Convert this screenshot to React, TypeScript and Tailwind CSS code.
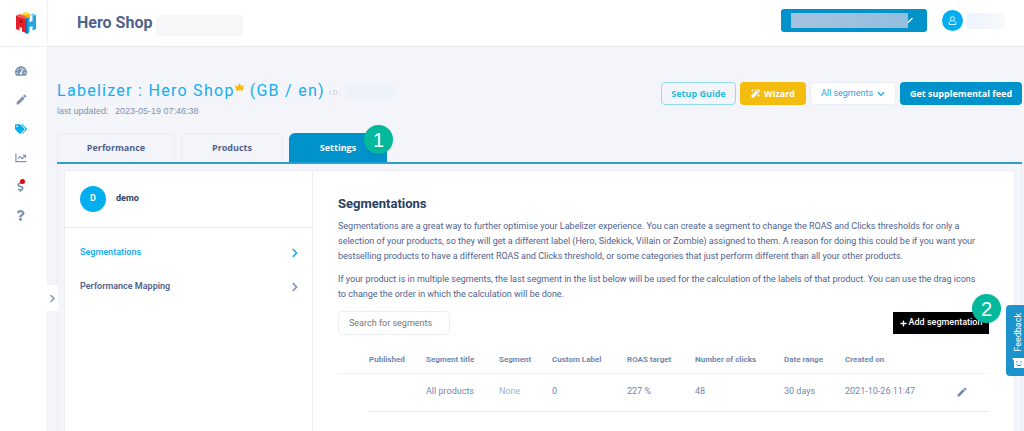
import { useState } from "react";
import {
  FaChevronDown,
  FaChevronRight,
  FaDollarSign,
  FaMagic,
  FaPlus,
  FaQuestion,
  FaTachometerAlt,
  FaTags,
} from "react-icons/fa";
import { MdEdit } from "react-icons/md";

type Segment = {
  title: string;
  segment: string;
  customLabel: string;
  roasTarget: string;
  clicks: string;
  dateRange: string;
  createdOn: string;
};

const SEGMENTS: Segment[] = [
  {
    title: "All products",
    segment: "None",
    customLabel: "0",
    roasTarget: "227 %",
    clicks: "48",
    dateRange: "30 days",
    createdOn: "2021-10-26 11:47",
  },
];

const TABS = [
  { label: "Performance", width: "w-[118px]" },
  { label: "Products", width: "w-[102px]" },
  { label: "Settings", width: "w-[98px]" },
];

const COLUMNS = [
  { label: "Published", width: "w-[57px]" },
  { label: "Segment title", width: "w-[73px]" },
  { label: "Segment", width: "w-[53px]" },
  { label: "Custom Label", width: "w-[75px]" },
  { label: "ROAS target", width: "w-[68px]" },
  { label: "Number of clicks", width: "w-[89px]" },
  { label: "Date range", width: "w-[61px]" },
  { label: "Created on", width: "w-[111px]" },
];

function Logo() {
  return (
    <svg viewBox="0 0 22 24" className="h-6 w-[22px]" aria-hidden="true">
      {/* yellow block behind */}
      <path d="M7.500 2.500 11 1l4 1.500V8l-4 1.500L7.500 8z" fill="#f0b40c" />
      <path d="M7.500 2.500 11 1l4 1.500L11 4z" fill="#ffe23d" />
      {/* red A */}
      <path d="M1 4.500 11 8v14l-4-1.500V17l-2.500-1v3.500L1 18z" fill="#e4202d" />
      <path d="m1 4.500 4-1.500 6.500 3-.5 2z" fill="#f9554e" />
      <path d="m4.500 8.500 3 1v2.500l-3-1z" fill="#a5121f" />
      {/* blue H */}
      <path d="m11 7.500 3.500-1v4.500l3-1V5L21 4v14l-3.500 1.500V15l-3 1v5.500L11 23z" fill="#22a5e2" />
      <path d="m11 7.500 1.500-.500v15.500L11 23z" fill="#0b74b0" />
      <path d="m15 4 3-1.500 3 1.500-3.500 1z" fill="#5cc9f4" />
    </svg>
  );
}

function ChartIcon() {
  return (
    <svg viewBox="0 0 20 16" className="h-2.5 w-3" fill="none" stroke="currentColor" strokeWidth="2">
      <path d="M1.500 1v13H19" />
      <path d="m5 9 3.500-3.500L12 9l5-5M13 3.500h4.500V8" />
    </svg>
  );
}

function CrownIcon() {
  return (
    <svg viewBox="0 0 18 16" className="mt-1 mr-1.5 h-2 w-[9px] shrink-0" fill="#f5b914" aria-hidden="true">
      <path d="M0 3.500 5 7 9 0l4 7 5-3.500L15.500 15h-13z" />
    </svg>
  );
}

function UserIcon() {
  return (
    <svg viewBox="0 0 16 16" className="size-[9px]" fill="none" stroke="currentColor" strokeWidth="1.5">
      <circle cx="8" cy="5" r="3.800" />
      <path d="M5 8.500 2 11.500V15h12v-3.500l-3-3" />
    </svg>
  );
}

function FeedbackIcon() {
  return (
    <svg viewBox="0 0 12 10" className="h-2.5 w-3 shrink-0" aria-hidden="true">
      <path d="M0 0h12v10H2V3z" fill="#fff" />
      <path d="M5 3v1.500M9 3v1.500M4.500 6.500c1 1.500 4 1.500 5 0" fill="none" stroke="#1c93cd" />
    </svg>
  );
}

function StepBadge({ step }: { step: number }) {
  return (
    <span className="flex size-[29px] items-center justify-center rounded-full bg-[#04b89c] font-['Liberation_Sans',sans-serif] text-xl text-white shadow">
      {step}
    </span>
  );
}

function Sidebar() {
  const items = [
    { label: "Dashboard", icon: <FaTachometerAlt size={12} /> },
    { label: "Edit", icon: <MdEdit size={13} /> },
    { label: "Labels", icon: <FaTags size={12} />, active: true },
    { label: "Reports", icon: <ChartIcon /> },
    { label: "Billing", icon: <FaDollarSign className="h-[11px] w-auto" />, alert: true },
    { label: "Help", icon: <FaQuestion className="h-[11px] w-auto" /> },
  ];

  return (
    <aside className="relative w-12 shrink-0 border-r border-[#f0f2f7] bg-white">
      <div className="flex h-[47px] items-center border-b border-[#eceef5] pl-[15px]">
        <Logo />
      </div>
      <nav className="flex flex-col pt-[9px]">
        {items.map((item) => (
          <a
            key={item.label}
            href="#"
            aria-label={item.label}
            className={`flex h-[29px] items-center pl-[15px] ${item.active ? "text-[#03aeef]" : "text-[#7f92b0]"}`}
          >
            <span className="relative">
              {item.icon}
              {item.alert && (
                <span className="absolute -top-0.5 left-[5px] size-[5px] rounded-full bg-[#e30613]" />
              )}
            </span>
          </a>
        ))}
      </nav>
      <button
        type="button"
        aria-label="Expand menu"
        className="absolute top-[285px] left-[47px] flex h-[26px] w-[11px] items-center justify-center bg-white text-[#7f92b0]"
      >
        <FaChevronRight size={9} />
      </button>
    </aside>
  );
}

function Header() {
  return (
    <header className="flex h-[47px] items-center justify-between border-b border-[#e8ebf3] bg-white pr-[19px] pl-[29px]">
      <div className="flex items-center gap-1">
        <h1 className="text-base font-bold text-[#4f628e]">Hero Shop</h1>
        <span className="mt-1 h-[21px] w-[87px] bg-[#f6f7f8]" />
      </div>
      <div className="flex items-center pb-[5px]">
        <button
          type="button"
          aria-label="Select shop"
          className="mr-[15px] flex h-[23px] w-[146px] items-center rounded-[3px] bg-[#0093cb] pl-2.5 text-white"
        >
          <span className="h-[15px] w-[117px] bg-linear-to-r from-[#a5c2df] to-[#93bedd]" />
          <svg viewBox="0 0 5 5" className="size-[5px]" fill="none" stroke="currentColor" strokeWidth="1.5">
            <path d="M0 4.500 4.500 0" />
          </svg>
        </button>
        <span className="flex size-[21px] items-center justify-center rounded-full bg-[#03aeef] text-white">
          <UserIcon />
        </span>
        <span className="ml-1 h-4 w-[38px] bg-linear-to-r from-[#edf4fd] to-[#f8f9fa]" />
      </div>
    </header>
  );
}

function SegmentTable() {
  return (
    <table className="mt-3 w-full table-fixed text-left text-[9px] text-[#7189ae]">
      <thead>
        <tr className="h-[26px] border-b border-[#f1f2f7] text-[8px]">
          <th className="w-[31px]" aria-label="Order" />
          {COLUMNS.map((column) => (
            <th key={column.label} className={`font-bold whitespace-nowrap ${column.width}`}>
              {column.label}
            </th>
          ))}
          <th aria-label="Actions" />
        </tr>
      </thead>
      <tbody>
        {SEGMENTS.map((row) => (
          <tr key={row.title} className="h-[38px] whitespace-nowrap">
            <td />
            <td className="border-b border-[#e9ebf4]" />
            <td className="border-b border-[#e9ebf4]">{row.title}</td>
            <td className="border-b border-[#e9ebf4] text-[#9fb0c9]">{row.segment}</td>
            <td className="border-b border-[#e9ebf4]">{row.customLabel}</td>
            <td className="border-b border-[#e9ebf4]">{row.roasTarget}</td>
            <td className="border-b border-[#e9ebf4]">{row.clicks}</td>
            <td className="border-b border-[#e9ebf4]">{row.dateRange}</td>
            <td className="border-b border-[#e9ebf4]">{row.createdOn}</td>
            <td className="border-b border-[#e9ebf4]">
              <button type="button" aria-label={`Edit ${row.title}`} className="block">
                <MdEdit size={12} />
              </button>
            </td>
          </tr>
        ))}
      </tbody>
    </table>
  );
}

export default function App() {
  const [activeTab, setActiveTab] = useState("Settings");
  const [search, setSearch] = useState("");

  return (
    <div className="relative flex min-h-screen overflow-hidden bg-[#f4f5fa] font-[Roboto,sans-serif] text-[#4f628e]">
      <Sidebar />
      <div className="flex min-w-0 flex-1 flex-col">
        <Header />
        <main className="flex flex-1 flex-col pt-[34px] pr-0.5 pl-[9px]">
          <div className="flex items-start justify-between">
            <div>
              <div className="flex h-5 items-center text-base tracking-[0.08em] text-[#12aeef]">
                <h2 className="flex">
                  Labelizer : Hero Shop
                  <CrownIcon />
                  (GB / en)
                </h2>
                <span className="mt-1 ml-1 text-[8px] text-[#c9cacd]">ID:</span>
                <span className="ml-1 h-4 w-12 bg-[#eef2fb]" />
              </div>
              <p className="mt-0.5 mb-0.5 font-['Liberation_Sans',sans-serif] text-[9px] leading-4 text-[#7f92b0]">
                last updated: <span className="ml-1">2023-05-19 07:46:38</span>
              </p>
            </div>
            <div className="flex h-[24px] items-stretch gap-1 pt-px text-[9px] whitespace-nowrap">
              <button type="button" className="w-[75px] rounded-sm border border-[#8fdcec] font-['Open_Sans'] font-bold text-[#1dbfdc]">
                Setup Guide
              </button>
              <button type="button" className="flex w-[66px] items-center justify-center gap-1 rounded-sm bg-[#f4bc0e] font-['Open_Sans'] font-bold text-white">
                <FaMagic size={9} />
                Wizard
              </button>
              <button type="button" className="flex w-[86px] items-center justify-center gap-1 rounded-sm border border-[#eceef5] bg-white text-[#1ba8e5]">
                All segments
                <FaChevronDown size={8} />
              </button>
              <button type="button" className="w-[122px] rounded-sm bg-[#0093cb] font-['Open_Sans'] font-bold text-white">
                Get supplemental feed
              </button>
            </div>
          </div>

          <div className="mt-3 flex gap-1.5 border-b-2 border-[#2d9fce]">
            {TABS.map((tab) => (
              <div key={tab.label} className="relative">
                <button
                  type="button"
                  onClick={() => setActiveTab(tab.label)}
                  className={`h-[29px] rounded-t-md font-['Open_Sans'] text-[9px] font-bold ${tab.width} ${
                    activeTab === tab.label
                      ? "bg-[#0093cb] text-white"
                      : "border border-b-0 border-[#e9ebf2] text-[#4f628e]"
                  }`}
                >
                  {tab.label}
                </button>
                {tab.label === "Settings" && (
                  <span className="absolute -top-2 -right-1.5">
                    <StepBadge step={1} />
                  </span>
                )}
              </div>
            ))}
          </div>

          <div className="flex flex-1 border-x border-[#e9ebf4] px-1.5 pt-1.5">
            <div className="flex flex-1 rounded-t-sm border border-b-0 border-[#eceef6] bg-white">
              <div className="w-[248px] shrink-0 border-r border-[#eef0f6]">
                <div className="flex h-[57px] items-center gap-2.5 border-b border-[#e9ebf4] pl-[15px] text-[9px] font-bold text-[#2b4264]">
                  <span className="flex size-[26px] items-center justify-center rounded-full bg-[#03aeef] text-white">
                    D
                  </span>
                  demo
                </div>
                <nav className="flex flex-col pt-2 text-[9px] font-semibold">
                  <a href="#" className="flex h-[34px] items-center justify-between pr-3 pl-[15px] text-[#14aef0]">
                    Segmentations
                    <FaChevronRight size={10} />
                  </a>
                  <a href="#" className="flex h-[34px] items-center justify-between pr-3 pl-[15px]">
                    Performance Mapping
                    <FaChevronRight size={10} className="text-[#7f92b0]" />
                  </a>
                </nav>
              </div>

              <section className="flex-1 pt-6 pr-[25px] pl-[25px]">
                <h3 className="text-[13px] leading-[18px] font-bold text-[#27415f]">Segmentations</h3>
                <p className="mt-1.5 pr-2 text-[9px] leading-[15px]">
                  Segmentations are a great way to further optimise your Labelizer experience. You can create a
                  segment to change the ROAS and Clicks thresholds for only a selection of your products, so they
                  will get a different label (Hero, Sidekick, Villain or Zombie) assigned to them. A reason for
                  doing this could be if you want your bestselling products to have a different ROAS and Clicks
                  threshold, or some categories that just perform different than all your other products.
                </p>
                <p className="mt-2 pr-2 text-[9px] leading-[15px]">
                  If your product is in multiple segments, the last segment in the list below will be used for the
                  calculation of the labels of that product. You can use the drag icons to change the order in
                  which the calculation will be done.
                </p>
                <div className="mt-[9px] flex items-center justify-between">
                  <input
                    type="text"
                    value={search}
                    onChange={(e) => setSearch(e.target.value)}
                    placeholder="Search for segments"
                    aria-label="Search for segments"
                    className="h-6 w-28 rounded-sm border border-[#eceef3] px-2.5 text-[9px] placeholder:text-[#777]"
                  />
                  <div className="relative">
                    <button type="button" className="flex h-[22px] w-24 items-center justify-center gap-0.5 bg-black text-[9px] font-medium whitespace-nowrap text-white">
                      <FaPlus size={7} />
                      Add segmentation
                    </button>
                    <span className="absolute -top-[18px] -right-3">
                      <StepBadge step={2} />
                    </span>
                  </div>
                </div>
                <SegmentTable />
              </section>
            </div>
          </div>
        </main>
      </div>

      <button
        type="button"
        className="absolute top-[305px] right-0 flex h-[71px] w-[18px] flex-col items-end justify-between overflow-hidden rounded-l-sm bg-[#1c93cd] pt-2 pb-2 text-[9px] text-white"
      >
        <span className="rotate-180 leading-[12px] [writing-mode:vertical-rl]">Feedback</span>
        <FeedbackIcon />
      </button>
    </div>
  );
}
